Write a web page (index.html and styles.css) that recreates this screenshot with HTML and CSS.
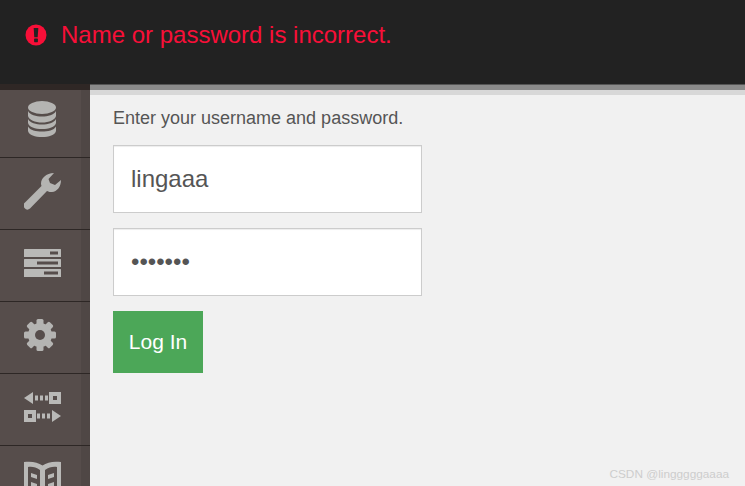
FILE: index.html
```html
<!DOCTYPE html>
<html lang="en">
<head>
    <meta charset="UTF-8">
    <meta name="viewport" content="width=device-width, initial-scale=1.0">
    <title>Log In</title>
    <link rel="stylesheet" href="styles.css">
</head>
<body>
    <div class="banner">
        <svg class="banner-icon" viewBox="0 0 22 22"><circle cx="11" cy="11" r="10.500" fill="#f80f38"/><path d="M8.700 4h4.600l-.6 9.200H9.300z" fill="#222"/><rect x="9.100" y="14.600" width="3.800" height="3.600" rx=".6" fill="#222"/></svg>
        <span>Name or password is incorrect.</span>
    </div>
    <div class="layout">
        <nav class="sidebar">
            <a class="side-item side-item-first">
                <svg width="28" height="36" viewBox="0 0 28 36"><g fill="#b4b4b2"><ellipse cx="14" cy="6.500" rx="14" ry="6.500"/><path d="M0 10c2 4 8 5.500 14 5.500S26 14 28 10v5c-1 4-7 6.500-14 6.500S1 19 0 15z"/><path d="M0 18c2 4 8 5.500 14 5.500S26 22 28 18v4c-1 4-7 6-14 6S1 26 0 22z"/><path d="M0 25.500c2 4 8 5 14 5s12-1 14-5V30c-1 4-7 6-14 6S1 34 0 30z"/></g></svg>
            </a>
            <a class="side-item">
                <svg class="wrench" width="38" height="37" viewBox="0 0 38 37"><path d="M30 0C22 .5 17 5 17 11l.5 2L1 29.500A3.500 3.500 0 0 0 6 35.500L23 18c2 1 3 1 5 1 5-.5 9-5 9-12l-6 5-5-2-1.500-4z" fill="#b4b4b2"/></svg>
            </a>
            <a class="side-item">
                <svg width="37" height="28" viewBox="0 0 37 28"><g fill="#b9b9b7"><rect width="37" height="8" rx=".5"/><rect y="10" width="37" height="8" rx=".5"/><rect y="20" width="37" height="8" rx=".5"/></g><g fill="#564d4b"><rect x="26" y="2.500" width="8" height="3"/><rect x="13" y="12.500" width="21" height="3"/><rect x="20" y="22.500" width="14" height="3"/></g></svg>
            </a>
            <a class="side-item side-item-gear">
                <svg width="32" height="32" viewBox="0 0 32 32"><g fill="#b4b4b2"><circle cx="16" cy="16" r="12"/><rect x="12.500" width="7" height="32" rx="1.500"/><rect x="12.500" width="7" height="32" rx="1.500" transform="rotate(45 16 16)"/><rect x="12.500" width="7" height="32" rx="1.500" transform="rotate(90 16 16)"/><rect x="12.500" width="7" height="32" rx="1.500" transform="rotate(135 16 16)"/></g><circle cx="16" cy="16" r="5" fill="#564d4b"/></svg>
            </a>
            <a class="side-item">
                <svg width="37" height="30" viewBox="0 0 37 30"><g fill="#b9b9b7"><path d="M0 6 9 0v12z"/><rect x="11" y="3.500" width="3" height="5"/><rect x="16" y="3.500" width="3" height="5"/><rect x="21" y="3.500" width="3" height="5"/><path fill-rule="evenodd" d="M25 0h12v12H25zm4 4v4h4V4z"/><path fill-rule="evenodd" d="M0 18h12v12H0zm4 4v4h4v-4z"/><rect x="13" y="21.500" width="3" height="5"/><rect x="18" y="21.500" width="3" height="5"/><rect x="23" y="21.500" width="3" height="5"/><path d="M37 24l-9 6V18z"/></g></svg>
            </a>
            <a class="side-item">
                <svg width="37" height="36" viewBox="0 0 37 36"><path d="M0 1c7-1 14 0 18.500 3.500C23 1 30 0 37 1v35H0z" fill="#b9b9b7"/><path d="M4 6c4-.5 8 0 12 3v27H4zM33 6c-4-.5-8 0-12 3v27h12z" fill="#564d4b"/><path d="M7 12l6 2v4l-6-2zM30 12l-6 2v4l6-2zM7 21l6 2v4l-6-2zM30 21l-6 2v4l6-2z" fill="#b9b9b7"/></svg>
            </a>
        </nav>
        <main class="content">
            <div class="top-strip"></div>
            <form class="login-form" action="">
                <p class="prompt">Enter your username and password.</p>
                <input class="field" type="text" value="lingaaa" autocomplete="off">
                <input class="field" type="password" value="1234567" autocomplete="off">
                <button class="login-btn" type="button">Log In</button>
            </form>
        </main>
    </div>
    <div class="watermark">CSDN @lingggggaaaa</div>
</body>
</html>
```

FILE: styles.css
```css
html, body { margin: 0; height: 100%; overflow: hidden; }
body { font-family: "Liberation Sans", Arial, sans-serif; background-color: #f1f1f1; display: flex; flex-direction: column; position: relative; }

.banner { height: 84px; flex: none; box-sizing: border-box; background-color: #222; color: #f80f38; font-size: 24px; display: flex; align-items: center; gap: 14px; padding: 0 0 14px 25px; }
.banner-icon { width: 22px; height: 22px; flex: none; }

.layout { flex: 1; display: flex; min-height: 0; }

.sidebar { width: 90px; flex: none; box-sizing: border-box; overflow: hidden; background-color: #564d4b; border-top: 6px solid #2f2725; box-shadow: inset -9px 0 0 #4f4745; }
.side-item { display: flex; align-items: center; justify-content: center; box-sizing: border-box; height: 72px; padding: 0 6px 5px 0; border-bottom: 1px solid #2d2725; }
.side-item-first { height: 68px; padding-bottom: 10px; }
.side-item-gear svg { margin-right: 5px; }
.wrench { margin-left: 2px; }

.content { flex: 1; display: flex; flex-direction: column; }
.top-strip { height: 11px; flex: none; box-sizing: border-box; background-color: #8b8b8b; border-top: 1px solid #555; border-bottom: 5px solid #d8d8d8; }

.login-form { display: flex; flex-direction: column; align-items: flex-start; padding-left: 23px; }
.prompt { margin: 0 0 16px; padding-top: 13px; font-size: 18px; line-height: 21px; color: #555; }
.field { width: 309px; height: 68px; box-sizing: border-box; margin-bottom: 15px; padding: 0 17px; border: 1px solid #ccc; border-radius: 0; outline: none; background-color: #fff; color: #555; font-family: inherit; font-size: 24px; box-shadow: inset 0 1px 1px rgba(0, 0, 0, .075); }
.login-btn { width: 90px; height: 62px; padding: 0; border: 0; background-color: #4ca758; color: #fff; font-family: inherit; font-size: 21px; }

.watermark { position: absolute; right: 16px; bottom: 5px; font-size: 11.8px; color: #cdcdcd; }
```
